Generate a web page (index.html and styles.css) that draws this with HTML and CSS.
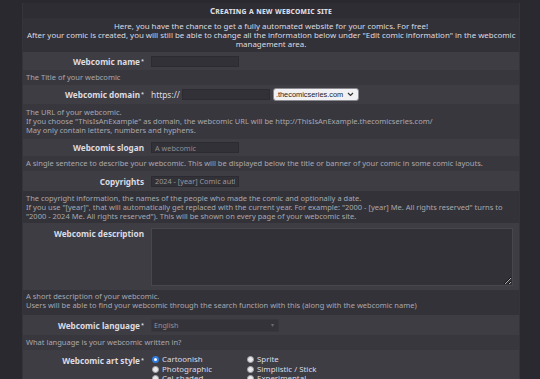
FILE: index.html
```html
<!DOCTYPE html>
<html lang="en">
  <head>
    <meta charset="UTF-8" />
    <title>Creating a new webcomic site</title>
    <link rel="stylesheet" href="styles.css">
  </head>

  <body>
    <div class="panel">
      <div class="panel-title">Creating a new webcomic site</div>
      <div class="intro">
        Here, you have the chance to get a fully automated website for your comics. For free!<br />
        After your comic is created, you will still be able to change all the information below under "Edit comic information" in the webcomic<br />
        management area.
      </div>

      <div class="row h18">
        <label class="label">Webcomic name<sup>*</sup></label>
        <div class="ctl"><input class="text" type="text" /></div>
      </div>
      <div class="help h15">The Title of your webcomic</div>

      <div class="row h19">
        <label class="label">Webcomic domain<sup>*</sup></label>
        <div class="ctl">
          <span class="prefix">https://</span>
          <input class="text" type="text" />
          <span class="domain">.thecomicseries.com
            <svg width="7" height="5" viewBox="0 0 7 5"><path d="M1 1l2.5 2.5L6 1" fill="none" stroke="#333" stroke-width="1.2" /></svg>
          </span>
        </div>
      </div>
      <div class="help h35">
        The URL of your webcomic.<br />
        If you choose "ThisIsAnExample" as domain, the webcomic URL will be http://ThisIsAnExample.thecomicseries.com/<br />
        May only contain letters, numbers and hyphens.
      </div>

      <div class="row h17">
        <label class="label">Webcomic slogan</label>
        <div class="ctl"><input class="text" type="text" placeholder="A webcomic" /></div>
      </div>
      <div class="help h15">A single sentence to describe your webcomic. This will be displayed below the title or banner of your comic in some comic layouts.</div>

      <div class="row h20">
        <label class="label">Copyrights</label>
        <div class="ctl"><input class="text" type="text" value="2024 - [year] Comic author" /></div>
      </div>
      <div class="help dark h32">
        The copyright information, the names of the people who made the comic and optionally a date.<br />
        If you use "[year]", that will automatically get replaced with the current year. For example: "2000 - [year] Me. All rights reserved" turns to<br />
        "2000 - 2024 Me. All rights reserved"). This will be shown on every page of your webcomic site.
      </div>

      <div class="row top h67">
        <label class="label">Webcomic description</label>
        <div class="ctl"><textarea class="area"></textarea></div>
      </div>
      <div class="help dark h25">
        A short description of your webcomic.<br />
        Users will be able to find your webcomic through the search function with this (along with the webcomic name)
      </div>

      <div class="row h20">
        <label class="label">Webcomic language<sup>*</sup></label>
        <div class="ctl">
          <span class="lang">English<span class="arrow">&#9662;</span></span>
        </div>
      </div>
      <div class="help h15">What language is your webcomic written in?</div>

      <div class="row top art">
        <label class="label">Webcomic art style<sup>*</sup></label>
        <div class="radios">
          <label><span class="radio on"></span>Cartoonish</label>
          <label><span class="radio"></span>Sprite</label>
          <label><span class="radio"></span>Photographic</label>
          <label><span class="radio"></span>Simplistic / Stick</label>
          <label><span class="radio"></span>Cel-shaded</label>
          <label><span class="radio"></span>Experimental</label>
        </div>
      </div>
    </div>
  </body>
</html>
```

FILE: styles.css
```css
* {
  margin: 0;
  padding: 0;
  box-sizing: border-box;
}

body {
  background-color: #2a2930;
  font-family: "Noto Sans", "DejaVu Sans", sans-serif;
  color: #dcdbe0;
  overflow: hidden;
}

.panel {
  width: 498px;
  margin: 3px 0 0 22px;
  border-left: 1px solid #35343b;
  border-right: 1px solid #35343b;
  background-color: #3a3940;
}

.panel-title {
  height: 15px;
  background-color: #2e2d33;
  text-align: center;
  font-size: 8px;
  line-height: 15px;
  font-weight: bold;
  font-variant: small-caps;
  letter-spacing: 0.2px;
}

.intro {
  height: 34px;
  padding: 4px 4px 0;
  background-color: #323137;
  text-align: center;
  font-size: 7.9px;
  line-height: 9px;
  white-space: nowrap;
}

/* label + control rows */
.row {
  display: grid;
  grid-template-columns: 125px 1fr;
  align-items: center;
  background-color: #3e3d44;
}

.row.top {
  align-items: start;
  padding-top: 5px;
}

.h17 { height: 17px; }
.h18 { height: 18px; }
.h19 { height: 19px; }
.h20 { height: 20px; }
.h67 { height: 67px; }
.art { height: 40px; padding-top: 5px; }

.label {
  padding-right: 4px;
  text-align: right;
  font-size: 8.2px;
  font-weight: bold;
  line-height: 11px;
  white-space: nowrap;
}

.label sup {
  margin-left: 1px;
  font-size: 5.5px;
  vertical-align: 2px;
}

.ctl {
  display: flex;
  align-items: center;
  padding-left: 3px;
  font-size: 8px;
}

/* help rows */
.help {
  padding: 3px 3px 0;
  background-color: #38373e;
  font-size: 7.5px;
  line-height: 9px;
  color: #a9a8ae;
  white-space: nowrap;
}

.help.dark {
  background-color: #333238;
}

.h15 { height: 15px; }
.h35 { height: 35px; padding-top: 4px; }
.h32 { height: 32px; padding-top: 2.5px; }
.h25 { height: 25px; padding-top: 2px; }

/* controls */
.text {
  width: 88px;
  height: 11px;
  border: 1px solid #2c2b31;
  background-color: #323137;
  padding: 0 3px;
  font-family: inherit;
  font-size: 7.3px;
  color: #98979d;
  outline: none;
}

.text::placeholder {
  color: #8e8d93;
}

.prefix {
  margin-right: 2px;
  font-size: 8.4px;
}

.domain {
  display: flex;
  align-items: center;
  gap: 4px;
  height: 13px;
  margin-left: 3px;
  padding: 0 4px 0 2px;
  border: 1px solid #8a8990;
  border-radius: 3px;
  background-color: #f1f1f3;
  font-family: "Liberation Sans", sans-serif;
  font-size: 7.4px;
  color: #222;
}

.area {
  display: block;
  width: 362px;
  height: 58px;
  border: 1px solid #48474e;
  background-color: #323137;
  resize: both;
  outline: none;
}

.lang {
  display: flex;
  justify-content: space-between;
  align-items: center;
  width: 128px;
  height: 13px;
  padding: 0 4px 0 2px;
  background-color: #34333a;
  border: 1px solid #38373e;
  font-size: 7.2px;
  color: #939298;
}

.lang .arrow {
  font-size: 6px;
  color: #6c6b71;
}

.radios {
  display: grid;
  grid-template-columns: 95px auto;
  padding-left: 4px;
  font-size: 7.9px;
  line-height: 9.5px;
}

.radios label {
  display: flex;
  align-items: center;
  gap: 3px;
}

.radio {
  width: 7px;
  height: 7px;
  border-radius: 50%;
  background-color: #e8e8ea;
  border: 1px solid #a5a4aa;
}

.radio.on {
  background-color: #fff;
  border: 2px solid #2f7de1;
}
```
